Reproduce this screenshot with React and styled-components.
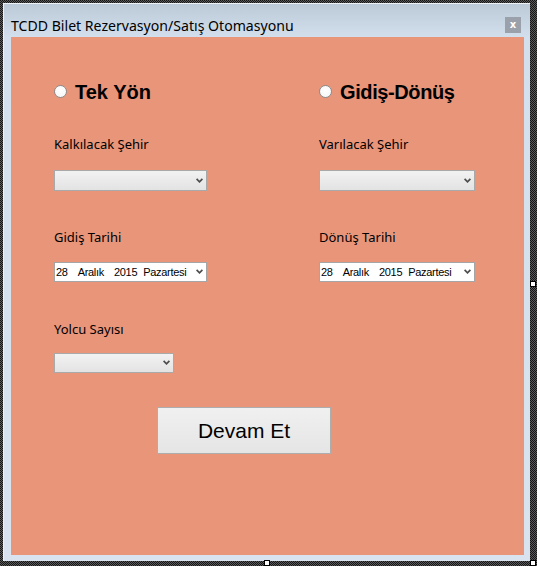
import React from 'react'
import styled, { createGlobalStyle } from 'styled-components'

const GlobalStyle = createGlobalStyle`
  html, body {
    margin: 0;
    padding: 0;
    background: #ffffff;
  }
  * {
    box-sizing: border-box;
  }
`

const Designer = styled.div`
  position: relative;
  width: 537px;
  height: 566px;
  padding: 3px 7px 5px 3px;
  background-color: #1c1c1c;
  background-image: repeating-conic-gradient(#5a5a5a 0 25%, #151515 0 50%);
  background-size: 2px 2px;
`

const Handle = styled.div`
  position: absolute;
  width: 6px;
  height: 6px;
  background: #ffffff;
  border: 1px solid #000000;
  left: ${p => p.$x}px;
  top: ${p => p.$y}px;
`

const Window = styled.div`
  width: 527px;
  height: 558px;
  border-top: 1px solid #eef3f8;
  border-left: 1px solid #eef3f8;
  padding: 0 6px 6px 7px;
  background: linear-gradient(#bccad8 0px, #d3dfec 34px, #d9e3f0 100%);
  display: flex;
  flex-direction: column;
`

const TitleBar = styled.div`
  height: 33px;
  display: flex;
  align-items: flex-start;
  justify-content: space-between;
  padding-top: 13px;
  padding-right: 3px;
`

const Title = styled.span`
  font-family: 'Noto Sans', sans-serif;
  font-size: 14.1px;
  line-height: 18px;
  color: #000000;
`

const CloseButton = styled.div`
  width: 16px;
  height: 16px;
  background: #9aa1aa;
  color: #ffffff;
  font-family: 'DejaVu Sans', sans-serif;
  font-weight: bold;
  font-size: 10px;
  line-height: 15px;
  text-align: center;
`

const Client = styled.div`
  width: 513px;
  height: 518px;
  background: #e9957a;
  padding-left: 43px;
`

const Row = styled.div`
  display: grid;
  grid-template-columns: 265px 1fr;
  margin-top: ${p => p.$top}px;
`

const RadioOption = styled.label`
  display: flex;
  align-items: center;
  height: 20px;
  gap: 8px;
  font-family: 'Liberation Sans', Arial, sans-serif;
  font-weight: bold;
  font-size: 20px;
  line-height: 20px;
  letter-spacing: ${p => p.$ls || 0}px;
  color: #000000;
`

const RadioCircle = styled.span`
  width: 13px;
  height: 13px;
  border-radius: 50%;
  border: 1px solid #8c8c8c;
  background: radial-gradient(circle at 50% 40%, #ffffff 0, #f4f4f4 100%);
  margin-top: -1px;
`

const Field = styled.div`
  display: flex;
  flex-direction: column;
  align-items: flex-start;
`

const Label = styled.span`
  font-family: 'Noto Sans', sans-serif;
  font-size: 13px;
  line-height: 16px;
  color: #000000;
  margin-bottom: ${p => p.$gap}px;
`

const Combo = styled.div`
  position: relative;
  width: ${p => p.$w}px;
  height: ${p => p.$h}px;
  border: 1px solid #a9a9a9;
  background: linear-gradient(#f2f2f2, #e3e3e3);
`

const DateBox = styled.div`
  position: relative;
  width: ${p => p.$w}px;
  height: 20px;
  border: 1px solid #a5a5a5;
  background: #ffffff;
  display: flex;
  align-items: center;
  padding-left: 1px;
  font-family: 'Liberation Sans', Arial, sans-serif;
  font-size: 11px;
  letter-spacing: -0.3px;
  color: #000000;
`

const DatePart = styled.span`
  margin-left: ${p => p.$ml}px;
`

const ArrowWrap = styled.span`
  position: absolute;
  right: 3px;
  top: 50%;
  margin-top: -3px;
  display: flex;
`

const ButtonRow = styled.div`
  margin-top: 34px;
  padding-left: 103px;
`

const Button = styled.button`
  width: 174px;
  height: 47px;
  border: 1px solid #adadad;
  background: linear-gradient(#f0f0f0, #e5e5e5);
  font-family: 'Liberation Sans', Arial, sans-serif;
  font-size: 21px;
  color: #000000;
  padding: 0;
`

function Chevron () {
  return (
    <ArrowWrap>
      <svg width='7' height='5' viewBox='0 0 7 5'>
        <path d='M0.6 0.8 L3.5 3.8 L6.4 0.8' fill='none' stroke='#4d4d4d' strokeWidth='1.7' />
      </svg>
    </ArrowWrap>
  )
}

function DatePicker ({ width }) {
  return (
    <DateBox $w={width}>
      <DatePart $ml={0}>28</DatePart>
      <DatePart $ml={10}>Aralık</DatePart>
      <DatePart $ml={10}>2015</DatePart>
      <DatePart $ml={6}>Pazartesi</DatePart>
      <Chevron />
    </DateBox>
  )
}

function App () {
  return (
    <>
      <GlobalStyle />
      <Designer>
        <Window>
          <TitleBar>
            <Title>TCDD Bilet Rezervasyon/Satış Otomasyonu</Title>
            <CloseButton>x</CloseButton>
          </TitleBar>
          <Client>
            <Row $top={45}>
              <RadioOption><RadioCircle />Tek Yön</RadioOption>
              <RadioOption $ls={-0.4}><RadioCircle />Gidiş-Dönüş</RadioOption>
            </Row>
            <Row $top={34}>
              <Field>
                <Label $gap={18}>Kalkılacak Şehir</Label>
                <Combo $w={153} $h={21}><Chevron /></Combo>
              </Field>
              <Field>
                <Label $gap={18}>Varılacak Şehir</Label>
                <Combo $w={156} $h={21}><Chevron /></Combo>
              </Field>
            </Row>
            <Row $top={38}>
              <Field>
                <Label $gap={17}>Gidiş Tarihi</Label>
                <DatePicker width={153} />
              </Field>
              <Field>
                <Label $gap={17}>Dönüş Tarihi</Label>
                <DatePicker width={156} />
              </Field>
            </Row>
            <Row $top={39}>
              <Field>
                <Label $gap={16}>Yolcu Sayısı</Label>
                <Combo $w={120} $h={20}><Chevron /></Combo>
              </Field>
            </Row>
            <ButtonRow>
              <Button>Devam Et</Button>
            </ButtonRow>
          </Client>
        </Window>
        <Handle $x={530} $y={281} />
        <Handle $x={264} $y={560} />
        <Handle $x={530} $y={560} />
      </Designer>
    </>
  )
}

export default App
